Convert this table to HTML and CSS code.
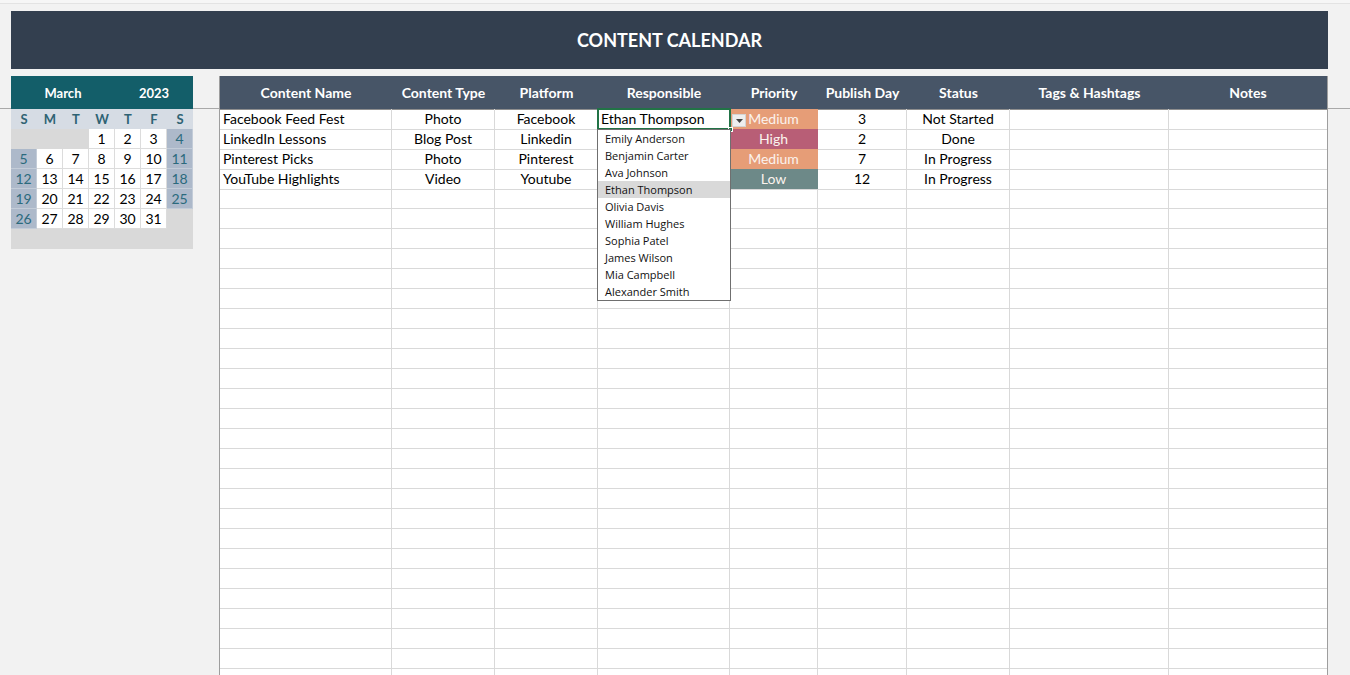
FILE: index.html
```html
<!DOCTYPE html>
<html lang="en">
<head>
<meta charset="utf-8">
<title>Content Calendar</title>
<link rel="stylesheet" href="styles.css">
</head>
<body>
<div class="page">
  <div class="topstrip"></div>
  <div class="freeze"></div>
  <header class="title">CONTENT CALENDAR</header>
  <div class="main">
    <section class="cal">
      <div class="cal-head"><span class="cal-month">March</span><span class="cal-year">2023</span></div>
      <div class="cal-grid">
        <div class="dow">S</div><div class="dow">M</div><div class="dow">T</div><div class="dow">W</div><div class="dow">T</div><div class="dow">F</div><div class="dow">S</div>
        <div class="d blank"></div><div class="d blank"></div><div class="d blank"></div><div class="d">1</div><div class="d">2</div><div class="d">3</div><div class="d we">4</div>
        <div class="d we">5</div><div class="d">6</div><div class="d">7</div><div class="d">8</div><div class="d">9</div><div class="d">10</div><div class="d we">11</div>
        <div class="d we">12</div><div class="d">13</div><div class="d">14</div><div class="d">15</div><div class="d">16</div><div class="d">17</div><div class="d we">18</div>
        <div class="d we">19</div><div class="d">20</div><div class="d">21</div><div class="d">22</div><div class="d">23</div><div class="d">24</div><div class="d we">25</div>
        <div class="d we">26</div><div class="d">27</div><div class="d">28</div><div class="d">29</div><div class="d">30</div><div class="d">31</div><div class="d blank"></div>
      </div>
      <div class="cal-foot"></div>
    </section>

    <section class="sheet">
      <div class="row head">
        <div>Content Name</div><div>Content Type</div><div>Platform</div><div>Responsible</div><div>Priority</div><div>Publish Day</div><div>Status</div><div>Tags &amp; Hashtags</div><div>Notes</div>
      </div>
      <div class="row">
        <div class="left">Facebook Feed Fest</div><div>Photo</div><div>Facebook</div>
        <div class="left active">Ethan Thompson
          <span class="handle"></span>
          <span class="dd-btn"><svg width="7" height="4" viewBox="0 0 7 4"><path d="M0 0H7L3.5 4Z" fill="#444"/></svg></span>
          <ul class="dd-list">
            <li>Emily Anderson</li>
            <li>Benjamin Carter</li>
            <li>Ava Johnson</li>
            <li class="sel">Ethan Thompson</li>
            <li>Olivia Davis</li>
            <li>William Hughes</li>
            <li>Sophia Patel</li>
            <li>James Wilson</li>
            <li>Mia Campbell</li>
            <li>Alexander Smith</li>
          </ul>
        </div>
        <div class="pri medium">Medium</div><div>3</div><div>Not Started</div><div></div><div></div>
      </div>
      <div class="row">
        <div class="left">LinkedIn Lessons</div><div>Blog Post</div><div>Linkedin</div><div></div><div class="pri high">High</div><div>2</div><div>Done</div><div></div><div></div>
      </div>
      <div class="row">
        <div class="left">Pinterest Picks</div><div>Photo</div><div>Pinterest</div><div></div><div class="pri medium">Medium</div><div>7</div><div>In Progress</div><div></div><div></div>
      </div>
      <div class="row">
        <div class="left">YouTube Highlights</div><div>Video</div><div>Youtube</div><div></div><div class="pri low">Low</div><div>12</div><div>In Progress</div><div></div><div></div>
      </div>
      <div class="row"><div></div><div></div><div></div><div></div><div></div><div></div><div></div><div></div><div></div></div>
      <div class="row"><div></div><div></div><div></div><div></div><div></div><div></div><div></div><div></div><div></div></div>
      <div class="row"><div></div><div></div><div></div><div></div><div></div><div></div><div></div><div></div><div></div></div>
      <div class="row"><div></div><div></div><div></div><div></div><div></div><div></div><div></div><div></div><div></div></div>
      <div class="row"><div></div><div></div><div></div><div></div><div></div><div></div><div></div><div></div><div></div></div>
      <div class="row"><div></div><div></div><div></div><div></div><div></div><div></div><div></div><div></div><div></div></div>
      <div class="row"><div></div><div></div><div></div><div></div><div></div><div></div><div></div><div></div><div></div></div>
      <div class="row"><div></div><div></div><div></div><div></div><div></div><div></div><div></div><div></div><div></div></div>
      <div class="row"><div></div><div></div><div></div><div></div><div></div><div></div><div></div><div></div><div></div></div>
      <div class="row"><div></div><div></div><div></div><div></div><div></div><div></div><div></div><div></div><div></div></div>
      <div class="row"><div></div><div></div><div></div><div></div><div></div><div></div><div></div><div></div><div></div></div>
      <div class="row"><div></div><div></div><div></div><div></div><div></div><div></div><div></div><div></div><div></div></div>
      <div class="row"><div></div><div></div><div></div><div></div><div></div><div></div><div></div><div></div><div></div></div>
      <div class="row"><div></div><div></div><div></div><div></div><div></div><div></div><div></div><div></div><div></div></div>
      <div class="row"><div></div><div></div><div></div><div></div><div></div><div></div><div></div><div></div><div></div></div>
      <div class="row"><div></div><div></div><div></div><div></div><div></div><div></div><div></div><div></div><div></div></div>
      <div class="row"><div></div><div></div><div></div><div></div><div></div><div></div><div></div><div></div><div></div></div>
      <div class="row"><div></div><div></div><div></div><div></div><div></div><div></div><div></div><div></div><div></div></div>
      <div class="row"><div></div><div></div><div></div><div></div><div></div><div></div><div></div><div></div><div></div></div>
      <div class="row"><div></div><div></div><div></div><div></div><div></div><div></div><div></div><div></div><div></div></div>
      <div class="row"><div></div><div></div><div></div><div></div><div></div><div></div><div></div><div></div><div></div></div>
      <div class="row"><div></div><div></div><div></div><div></div><div></div><div></div><div></div><div></div><div></div></div>
      <div class="row"><div></div><div></div><div></div><div></div><div></div><div></div><div></div><div></div><div></div></div>
      <div class="row"><div></div><div></div><div></div><div></div><div></div><div></div><div></div><div></div><div></div></div>
      <div class="row"><div></div><div></div><div></div><div></div><div></div><div></div><div></div><div></div><div></div></div>
    </section>
  </div>
</div>
</body>
</html>
```

FILE: styles.css
```css
* { box-sizing: border-box; }

html, body {
  margin: 0;
  padding: 0;
}

body {
  background: #f2f2f2;
  font-family: Lato, "Liberation Sans", sans-serif;
  color: #000;
  height: 675px;
  overflow: hidden;
}

.page {
  position: relative;
  height: 675px;
  overflow: hidden;
}

.topstrip {
  height: 4px;
  background: #f6f6f6;
  border-bottom: 1px solid #e3e3e3;
}

.freeze {
  position: absolute;
  left: 0;
  right: 0;
  top: 108px;
  height: 1px;
  background: #a9a9a9;
}

.title {
  margin: 7px 0 0 11px;
  width: 1317px;
  height: 58px;
  background: #333f4f;
  color: #fff;
  font-weight: 700;
  font-size: 18px;
  display: flex;
  align-items: center;
  justify-content: center;
}

.main {
  display: flex;
  align-items: flex-start;
  gap: 26px;
  margin-top: 7px;
  padding-left: 11px;
  position: relative;
  z-index: 1;
}

/* Calendar */
.cal {
  width: 182px;
  flex: none;
}

.cal-head {
  display: flex;
  align-items: center;
  height: 33px;
  background: #135e69;
  color: #fff;
  font-weight: 700;
  font-size: 13px;
}

.cal-month { width: 104px; text-align: center; }
.cal-year { width: 78px; text-align: center; }

.cal-grid {
  display: grid;
  grid-template-columns: repeat(7, 26px);
  grid-auto-rows: 20px;
}

.dow {
  background: #d6dce4;
  color: #2f6373;
  font-weight: 700;
  font-size: 13px;
  line-height: 20px;
  text-align: center;
}

.d {
  background: #fff;
  border-right: 1px solid #dcdcdc;
  border-bottom: 1px solid #dcdcdc;
  text-align: center;
  font-size: 14px;
  line-height: 20px;
}

.d.we {
  background: #adb9ca;
  color: #2b6a7d;
  border-color: #c3ccd8;
}

.d.blank {
  background: #d9d9d9;
  border-color: #d9d9d9;
}

.cal-foot {
  height: 20px;
  background: #d9d9d9;
}

/* Sheet */
.sheet {
  width: 1109px;
  flex: none;
  border-left: 1px solid #9e9e9e;
  border-right: 1px solid #9e9e9e;
  background: #fff;
}

.row {
  display: grid;
  grid-template-columns: 172px 103px 103px 132px 88px 89px 103px 159px 158px;
  height: 20px;
}

.row > div {
  border-right: 1px solid #d9d9d9;
  border-bottom: 1px solid #d9d9d9;
  font-size: 14px;
  line-height: 20px;
  text-align: center;
  white-space: nowrap;
}

.row > div:last-child { border-right: none; }

.row > .left {
  text-align: left;
  padding-left: 3px;
}

.row.head {
  height: 33px;
  background: #475567;
}

.row.head > div {
  color: #fff;
  font-weight: 700;
  line-height: 33px;
  border-right: none;
  border-bottom: 1px solid #8e8e8e;
}

.pri { color: #fbf3ee; }
.pri.medium { background: #e69d77; border-bottom-color: #f0c8b2 !important; border-right-color: #e69d77 !important; }
.pri.high { background: #b85e76; border-bottom-color: #d9a5b2 !important; border-right-color: #b85e76 !important; }
.pri.low { background: #6d8988; border-right-color: #6d8988 !important; }

.active {
  position: relative;
  z-index: 3;
}

.active::before {
  content: "";
  position: absolute;
  left: -1px;
  top: -1px;
  right: -2px;
  bottom: -1px;
  border: 2px solid #217346;
  pointer-events: none;
}

.handle {
  position: absolute;
  right: -4px;
  bottom: -3px;
  width: 5px;
  height: 5px;
  background: #217346;
  border: 1px solid #fff;
}

.dd-btn {
  position: absolute;
  left: calc(100% + 3px);
  top: 5px;
  width: 14px;
  height: 13px;
  background: #eeeeee;
  border: 1px solid #d4d4d4;
  display: flex;
  align-items: center;
  justify-content: center;
}

.dd-list {
  position: absolute;
  left: -1px;
  top: 100%;
  width: 134px;
  margin: 0;
  padding: 0;
  list-style: none;
  background: #fff;
  border: 1px solid #6f6f6f;
  z-index: 4;
}

.dd-list li {
  height: 17px;
  line-height: 18px;
  padding-left: 7px;
  font-family: "Open Sans", "Noto Sans", sans-serif;
  font-size: 11px;
  color: #111;
  text-align: left;
}

.dd-list li.sel { background: #d9d9d9; }
```
